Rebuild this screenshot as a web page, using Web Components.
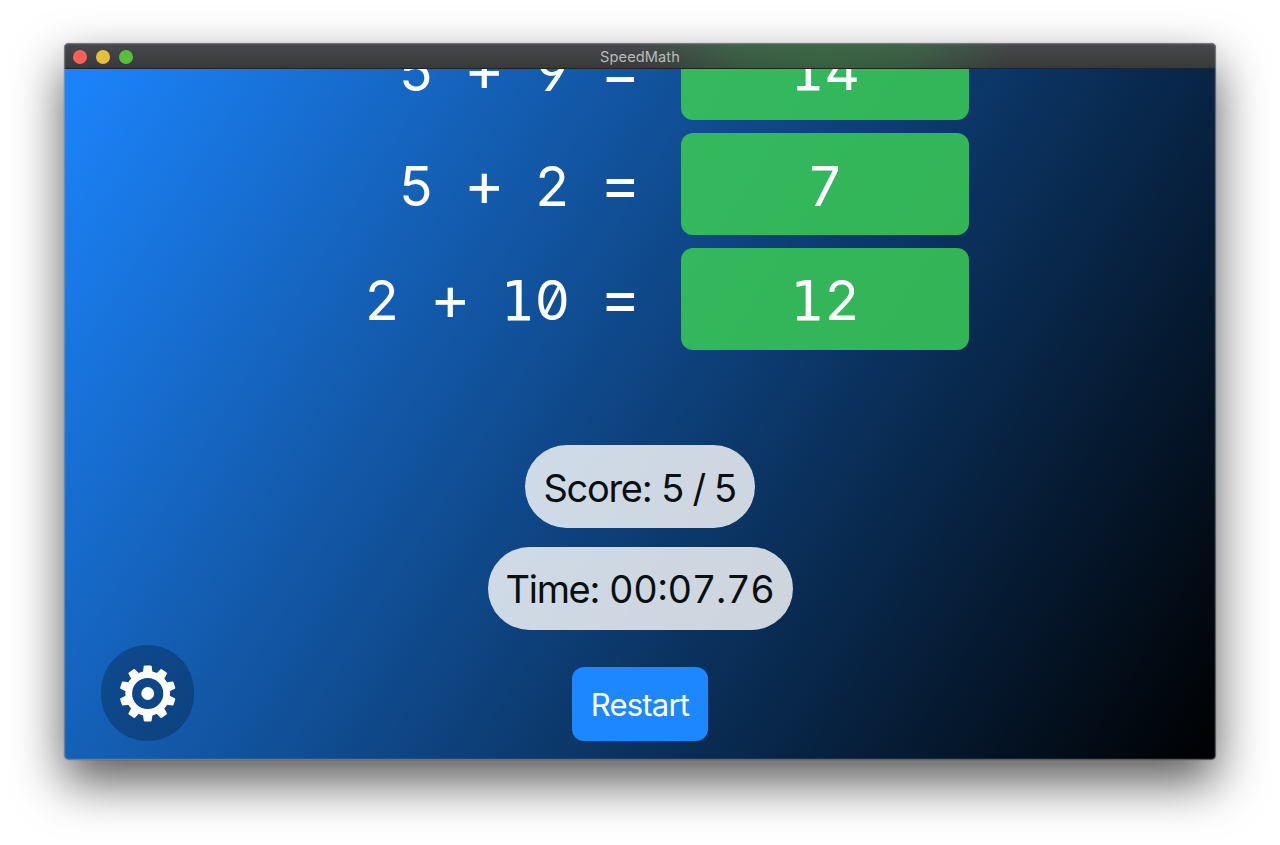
<!DOCTYPE html>
<html lang="en">
<head>
<meta charset="utf-8">
<title>SpeedMath</title>
<style>
html,body{margin:0;height:100%;background:#fff;font-family:Inter,"Open Sans",sans-serif}
body{box-sizing:border-box;padding:43px 64px 0;height:845px;overflow:hidden}
</style>
</head>
<body>
<app-window heading="SpeedMath">
  <problem-list>
    <problem-row answer="14">5 + 9 =</problem-row>
    <problem-row answer="7">5 + 2 =</problem-row>
    <problem-row answer="12">2 + 10 =</problem-row>
  </problem-list>
  <result-pill label="Score:" style="--w:230px;--ls:-1.5px;--gap:-1px">5 / 5</result-pill>
  <result-pill label="Time:" style="--w:305px;--ls:-0.35px;--gap:-0.5px;--features:'tnum','case'">00:07.76</result-pill>
  <restart-button>Restart</restart-button>
  <gear-button slot="corner"></gear-button>
</app-window>
<script>
function define(name, build){
  customElements.define(name, class extends HTMLElement{
    connectedCallback(){
      if(this.shadowRoot) return;
      this.attachShadow({mode:'open'}).innerHTML = build(this);
    }
  });
}
// Serifed one comes from a monospaced face; operators get a full-width cell
const digits = t => t.replace(/[1+=]/g, c => c === '1' ? '<span class="one">1</span>' : `<span class="op">${c}</span>`);
const numberStyle = `
  .num{font:400 55px/1 Inter,"Open Sans",sans-serif;font-feature-settings:"tnum","zero","cv04";color:#fff;white-space:pre;padding-top:4px}
  .one{font-family:"DejaVu Sans Mono",monospace;font-size:55px;letter-spacing:1px}
  .op{display:inline-flex;justify-content:center;width:34.1px;font-size:62px;line-height:40px;height:40px;vertical-align:0}`;

define('app-window', el => `<style>
  :host{display:flex;flex-direction:column;position:relative;box-sizing:border-box;height:717px;border-radius:5px;
    background:linear-gradient(121.9deg,#1c86ff,#000);box-shadow:0 22px 50px rgba(0,0,0,.66),0 0 1px rgba(0,0,0,.5)}
  header{position:relative;display:grid;grid-template-columns:1fr auto 1fr;align-items:center;height:26px;box-sizing:border-box;border-radius:5px 5px 0 0;
    border-bottom:1px solid #222325;padding:2px 9px 0;
    background:radial-gradient(ellipse 190px 60px at 761px 8px,rgba(55,125,68,.6),rgba(55,125,68,.45) 50%,transparent),linear-gradient(#47494c,#38393b)}
  .lights{display:flex;gap:9px;padding-left:.4px}
  i{width:14px;height:14px;border-radius:50%}
  h1{margin:0;font-size:14.6px;line-height:22px;padding-top:1px;font-weight:400;color:#b9bbbb;letter-spacing:.1px}
  main{flex:1;min-height:0;overflow:hidden;display:flex;flex-direction:column;align-items:center;border-radius:0 0 5px 5px;position:relative}
  .rim{position:absolute;inset:0;border-radius:5px;box-shadow:inset 0 0 0 1px rgba(150,160,165,.5),inset 0 0 0 2px rgba(150,160,165,.12);pointer-events:none}
  .corner{position:absolute;left:37px;bottom:19px}
  </style>
  <header><div class="lights"><i style="background:#ff5f57"></i><i style="background:#e5bf3c"></i><i style="background:#57c038"></i></div><h1>${el.getAttribute('heading')}</h1></header>
  <main><slot></slot><div class="corner"><slot name="corner"></slot></div></main><div class="rim"></div>`);

define('problem-list', () => `<style>
  :host{display:flex;flex-direction:column;gap:13.5px;margin:-50.6px 0 95.5px;width:1152px;flex:none}
  </style><slot></slot>`);

define('problem-row', el => `<style>${numberStyle}
  :host{display:grid;grid-template-columns:573.5px 288px;column-gap:43.5px;align-items:center;height:101.5px}
  .expr{text-align:right;word-spacing:18.4px}
  .box{display:grid;place-items:center;height:100%;border-radius:12px;background:rgba(58,203,86,.86)}
  </style>
  <div class="num expr">${digits(el.textContent)}</div>
  <div class="box"><span class="num">${digits(el.getAttribute('answer'))}</span></div>`);

define('result-pill', el => `<style>
  :host{display:grid;place-items:center;flex:none;width:var(--w);height:83px;margin-bottom:18.3px;border-radius:42px;
    background:rgba(255,255,255,.8);color:#0a0f12;font-size:38px;line-height:46px;white-space:pre}
  p{margin:0;padding-top:2px}
  .label{letter-spacing:-1.3px;margin-right:calc(var(--gap) + 1px)}
  .value{letter-spacing:var(--ls);font-feature-settings:var(--features,"tnum")}
  </style><p><span class="label">${el.getAttribute('label')} </span><span class="value"><slot></slot></span></p>`);

define('restart-button', () => `<style>
  :host{display:grid;place-items:center;flex:none;width:136.5px;height:74.5px;margin-top:18.6px;border-radius:12px;background:#1d87ff;color:#fff;
    font-size:31px;line-height:38px;letter-spacing:-.8px}
  span{padding-top:2px}
  </style><span><slot></slot></span>`);

define('gear-button', () => {
  const teeth = Array.from({length:10},(_,k)=>`<path transform="rotate(${k*36})" d="M-5 -20 L-3.9 -27.2 Q-3.7 -28 -2.9 -28 H2.9 Q3.7 -28 3.9 -27.2 L5 -20Z"/>`).join('');
  return `<style>
  :host{display:grid;place-items:center;width:93px;height:96px;border-radius:46.5px;background:rgba(0,12,24,.28)}
  svg{display:block}
  </style><svg width="60" height="60" viewBox="-29.7 -30.5 60 60" fill="#fff">${teeth}<circle r="19" fill="none" stroke="#fff" stroke-width="6.8"/><circle r="6.4"/></svg>`;
});
</script>
</body>
</html>
